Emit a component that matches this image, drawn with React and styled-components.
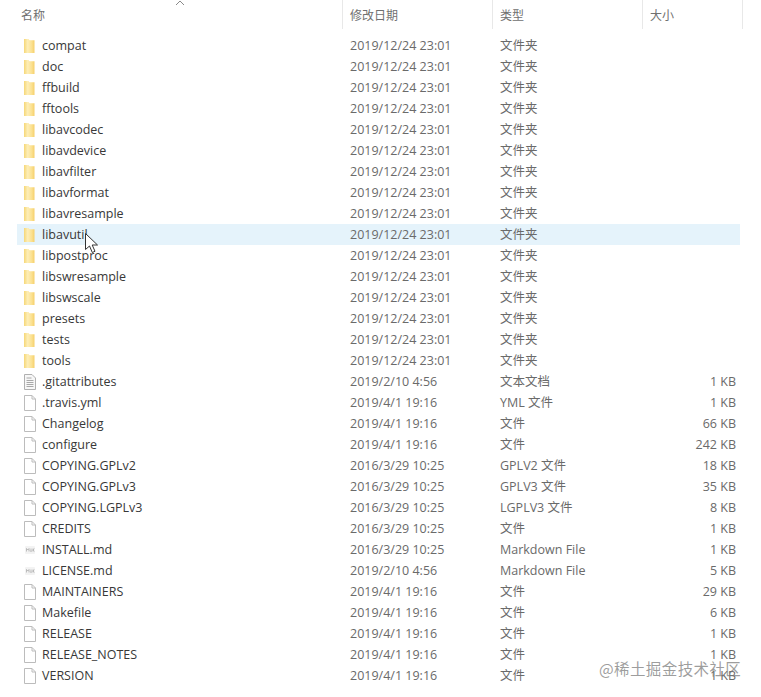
import React from 'react';
import styled, { createGlobalStyle } from 'styled-components';

const GlobalStyle = createGlobalStyle`
  html, body {
    margin: 0;
    padding: 0;
    background: #ffffff;
  }
  body {
    font-family: "Open Sans", "Noto Sans CJK SC", sans-serif;
    font-size: 12.5px;
    color: #5f5f5f;
  }
`;

const Window = styled.div`
  position: relative;
  width: 761px;
  height: 697px;
  overflow: hidden;
  background: #fff;
`;

const Header = styled.div`
  position: relative;
  display: grid;
  grid-template-columns: 343px 150px 150px 100px;
  height: 29px;
  margin-bottom: 6px;
`;

const HeaderCell = styled.div`
  display: flex;
  align-items: center;
  height: 29px;
  padding-left: ${props => props.$pad}px;
  border-right: 1px solid #e8e8e8;
  box-sizing: border-box;
  color: #707070;
  font-size: 12px;
`;

const SortArrow = styled.svg`
  position: absolute;
  left: 175px;
  top: 0;
`;

const Rows = styled.div`
  display: flex;
  flex-direction: column;
`;

const Row = styled.div`
  display: grid;
  grid-template-columns: 333px 150px 150px 86px;
  height: 21px;
  align-items: center;
  margin: 0 21px 0 17px;
  background: ${props => (props.$hover ? '#e5f3fb' : 'transparent')};
`;

const NameCell = styled.div`
  display: flex;
  align-items: center;
  padding-left: 7px;
  color: #383838;
  white-space: nowrap;
`;

const IconSlot = styled.span`
  display: flex;
  width: 12px;
  height: 16px;
  margin-right: 6px;
  align-items: center;
  justify-content: flex-start;
`;

const Cell = styled.div`
  white-space: nowrap;
  color: #6a6a6a;
  line-height: 21px;
  height: 21px;
`;

const SizeCell = styled(Cell)`
  text-align: right;
`;

const Watermark = styled.div`
  position: absolute;
  left: 599px;
  top: 658px;
  font-size: 15.5px;
  line-height: 20px;
  letter-spacing: 0.4px;
  color: rgba(120, 120, 120, 0.72);
  font-family: "Noto Sans CJK SC", sans-serif;
  white-space: nowrap;
`;

const Cursor = styled.svg`
  position: absolute;
  left: 84px;
  top: 232px;
`;

const FolderIcon = () => (
  <svg width="11" height="14" viewBox="0 0 11 14">
    <defs>
      <linearGradient id="folderFill" x1="0" x2="1" y1="0" y2="0">
        <stop offset="0" stopColor="#f6d777" />
        <stop offset="0.35" stopColor="#fdeeb8" />
        <stop offset="0.75" stopColor="#fbe08e" />
        <stop offset="1" stopColor="#f5cf6a" />
      </linearGradient>
    </defs>
    <path d="M0 0h4.500l1 1.200H10.500V14H0z" fill="url(#folderFill)" />
  </svg>
);

const FileIcon = () => (
  <svg width="12" height="16" viewBox="0 0 12 16">
    <path d="M.5 .5h7.500l3.500 3.500v11.500H.5z" fill="#fff" stroke="#bcbcbc" />
    <path d="M8 .5V4h3.500" fill="none" stroke="#bcbcbc" />
  </svg>
);

const TextIcon = () => (
  <svg width="12" height="16" viewBox="0 0 12 16">
    <path d="M.5 .5h7.500l3.500 3.500v11.500H.5z" fill="#f7f7f7" stroke="#b0b0b0" />
    <path d="M2.500 4h5M2.500 6.500h7M2.500 8.500h7M2.500 10.500h7M2.500 12.500h7" stroke="#a8a8a8" />
  </svg>
);

const MarkdownIcon = () => (
  <svg width="12" height="10" viewBox="0 0 12 10">
    <rect x="1" y="1" width="10" height="8" rx="1" fill="#f3f3f3" />
    <path d="M2.500 6.500V3.500L3.800 5 5 3.500V6.500M7 3.500v3M6.200 5.700l.8.800.8-.800M9 3.500v3M9 5l1.200-1.500M9 5l1.200 1.500" fill="none" stroke="#a6a6a6" strokeWidth="0.7" />
  </svg>
);

const icons = {
  folder: FolderIcon,
  file: FileIcon,
  text: TextIcon,
  md: MarkdownIcon,
};

const folderDate = '2019/12/24 23:01';
const folders = [
  'compat', 'doc', 'ffbuild', 'fftools', 'libavcodec', 'libavdevice', 'libavfilter', 'libavformat',
  'libavresample', 'libavutil', 'libpostproc', 'libswresample', 'libswscale', 'presets', 'tests', 'tools',
].map(name => ({ name, date: folderDate, type: '文件夹', size: '', icon: 'folder' }));

const files = [
  { name: '.gitattributes', date: '2019/2/10 4:56', type: '文本文档', size: '1 KB', icon: 'text' },
  { name: '.travis.yml', date: '2019/4/1 19:16', type: 'YML 文件', size: '1 KB', icon: 'file' },
  { name: 'Changelog', date: '2019/4/1 19:16', type: '文件', size: '66 KB', icon: 'file' },
  { name: 'configure', date: '2019/4/1 19:16', type: '文件', size: '242 KB', icon: 'file' },
  { name: 'COPYING.GPLv2', date: '2016/3/29 10:25', type: 'GPLV2 文件', size: '18 KB', icon: 'file' },
  { name: 'COPYING.GPLv3', date: '2016/3/29 10:25', type: 'GPLV3 文件', size: '35 KB', icon: 'file' },
  { name: 'COPYING.LGPLv3', date: '2016/3/29 10:25', type: 'LGPLV3 文件', size: '8 KB', icon: 'file' },
  { name: 'CREDITS', date: '2016/3/29 10:25', type: '文件', size: '1 KB', icon: 'file' },
  { name: 'INSTALL.md', date: '2016/3/29 10:25', type: 'Markdown File', size: '1 KB', icon: 'md' },
  { name: 'LICENSE.md', date: '2019/2/10 4:56', type: 'Markdown File', size: '5 KB', icon: 'md' },
  { name: 'MAINTAINERS', date: '2019/4/1 19:16', type: '文件', size: '29 KB', icon: 'file' },
  { name: 'Makefile', date: '2019/4/1 19:16', type: '文件', size: '6 KB', icon: 'file' },
  { name: 'RELEASE', date: '2019/4/1 19:16', type: '文件', size: '1 KB', icon: 'file' },
  { name: 'RELEASE_NOTES', date: '2019/4/1 19:16', type: '文件', size: '1 KB', icon: 'file' },
  { name: 'VERSION', date: '2019/4/1 19:16', type: '文件', size: '1 KB', icon: 'file' },
];

const items = [...folders, ...files];

export default function App() {
  return (
    <Window>
      <GlobalStyle />
      <Header>
        <HeaderCell $pad={21}>名称</HeaderCell>
        <HeaderCell $pad={7}>修改日期</HeaderCell>
        <HeaderCell $pad={7}>类型</HeaderCell>
        <HeaderCell $pad={7}>大小</HeaderCell>
        <SortArrow width="10" height="6" viewBox="0 0 10 6">
          <path d="M1 5l4-4 4 4" fill="none" stroke="#8a8a8a" />
        </SortArrow>
      </Header>
      <Rows>
        {items.map(item => {
          const Icon = icons[item.icon];
          return (
            <Row key={item.name} $hover={item.name === 'libavutil'}>
              <NameCell>
                <IconSlot><Icon /></IconSlot>
                {item.name}
              </NameCell>
              <Cell>{item.date}</Cell>
              <Cell>{item.type}</Cell>
              <SizeCell>{item.size}</SizeCell>
            </Row>
          );
        })}
      </Rows>
      <Cursor width="15" height="23" viewBox="0 0 15 23">
        <path d="M1.500 1.500v16l4-3.500 2.800 6.500 2.700-1.200-2.800-6.300h5.300z" fill="#fff" stroke="#333" strokeWidth="1" />
      </Cursor>
      <Watermark>@稀土掘金技术社区</Watermark>
    </Window>
  );
}
